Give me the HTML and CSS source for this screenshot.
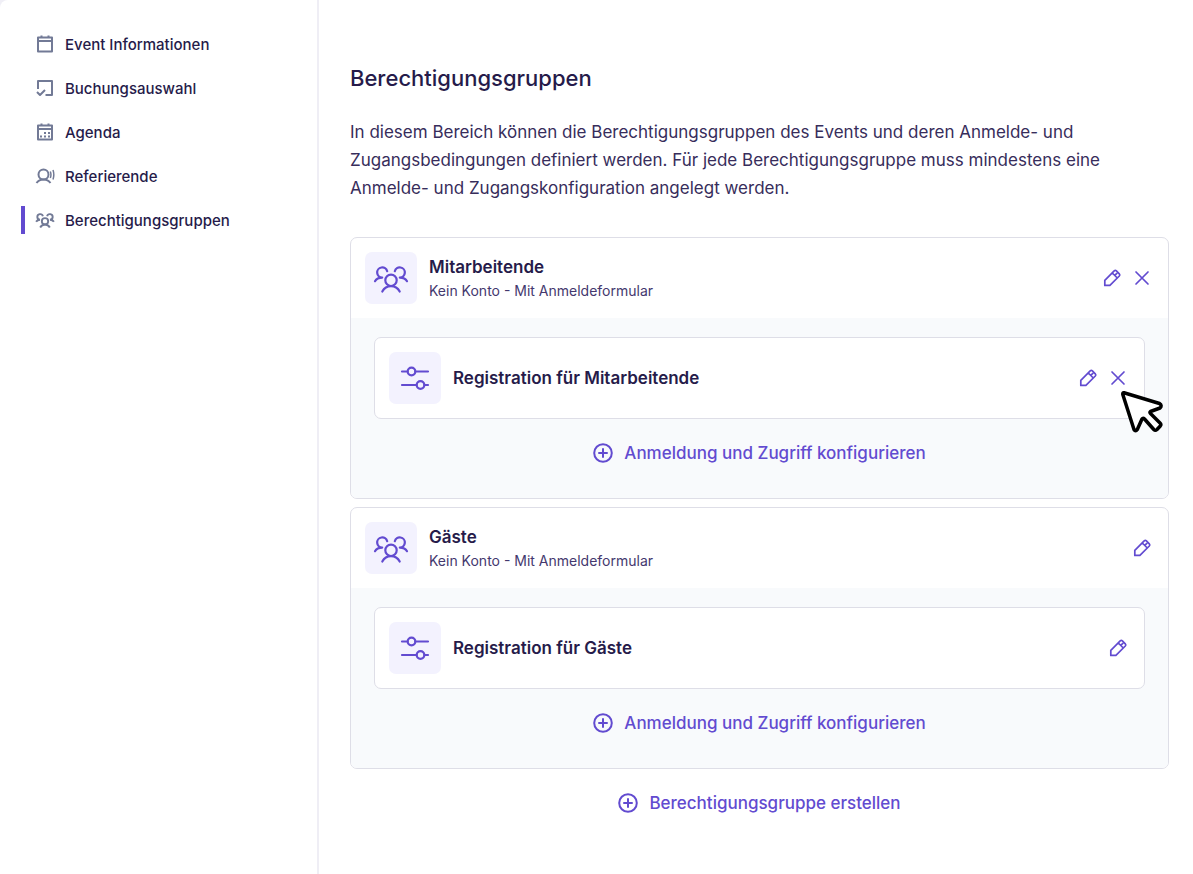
FILE: index.html
```html
<!DOCTYPE html>
<html lang="de">
<head>
    <meta charset="UTF-8">
    <meta name="viewport" content="width=device-width, initial-scale=1.0">
    <title>Berechtigungsgruppen</title>
    <link rel="stylesheet" href="styles.css">
</head>
<body>

<svg class="sprite" aria-hidden="true">
    <symbol id="icon-group" viewBox="0 0 36 36">
        <circle cx="18" cy="20.3" r="5.7"/>
        <path d="M9.300 31.500c1.800-3.400 4.900-5.400 8.700-5.400s6.900 2 8.700 5.400"/>
        <path d="M14.200 11.200A5.100 5.100 0 1 0 9.200 17.600M9.200 17.600C5.600 17.600 3.300 18.900 2 21.200"/>
        <path d="M21.800 11.200A5.100 5.100 0 1 1 26.800 17.600M26.800 17.600C30.400 17.600 32.700 18.900 34 21.200"/>
    </symbol>
    <symbol id="icon-sliders" viewBox="0 0 36 36">
        <path d="M5 11.500h5.500M18.500 11.500H31M5 25h14.500M27.500 25H31"/>
        <circle cx="14.500" cy="11.500" r="3.800"/>
        <circle cx="23.500" cy="25" r="3.800"/>
    </symbol>
    <symbol id="icon-edit" viewBox="0 0 20 20">
        <path d="M2.800 12.300 12.200 2.900a1.600 1.600 0 0 1 2.200 0l2.900 2.900a1.600 1.600 0 0 1 0 2.200L7.900 17.400H2.800zM10.300 5l5 5M12.800 7.400l2-2"/>
    </symbol>
    <symbol id="icon-close" viewBox="0 0 20 20">
        <path d="M4 4l12 12M16 4 4 16"/>
    </symbol>
    <symbol id="icon-plus" viewBox="0 0 20 20">
        <circle cx="10" cy="10" r="8.800"/>
        <path d="M10 6v8M6 10h8"/>
    </symbol>
</svg>

<div class="app">
    <aside class="sidebar">
        <nav>
            <a href="#" class="nav-item">
                <svg class="nav-icon" viewBox="0 0 20 20"><path d="M3 3.500h14v14H3zM3 7h14M6.500 1.500v3M13.500 1.500v3"/></svg>
                Event Informationen
            </a>
            <a href="#" class="nav-item">
                <svg class="nav-icon" viewBox="0 0 20 20"><path d="M3 11V3h14v14h-6.500M2 14l3 3 5-5"/></svg>
                Buchungsauswahl
            </a>
            <a href="#" class="nav-item">
                <svg class="nav-icon" viewBox="0 0 20 20"><path d="M3 3.500h14v14H3zM3 7h14M6.500 1.500v3M13.500 1.500v3"/><path d="M9 11h2M13 11h2M5 14.500h2M9 14.500h2M13 14.500h2"/></svg>
                Agenda
            </a>
            <a href="#" class="nav-item">
                <svg class="nav-icon" viewBox="0 0 20 20"><circle cx="8.500" cy="8.500" r="5"/><path d="M1.500 17c1.600-2.200 4-3.400 7-3.400s5.400 1.200 7 3.400"/><path class="waves" d="M15.300 5.500c.8 2 .8 4.500 0 6.500M18 4c1 2.900 1 6.600 0 9.500"/></svg>
                Referierende
            </a>
            <a href="#" class="nav-item active" aria-current="page">
                <svg class="nav-icon group" viewBox="0 0 36 36"><use href="#icon-group"/></svg>
                Berechtigungsgruppen
            </a>
        </nav>
    </aside>

    <main class="content">
        <h1>Berechtigungsgruppen</h1>
        <p class="intro">In diesem Bereich können die Berechtigungsgruppen des Events und deren Anmelde- und Zugangsbedingungen definiert werden. Für jede Berechtigungsgruppe muss mindestens eine Anmelde- und Zugangskonfiguration angelegt werden.</p>

        <div class="groups">
            <section class="group-card">
                <div class="card-row">
                    <div class="tile"><svg><use href="#icon-group"/></svg></div>
                    <div class="card-text">
                        <h2>Mitarbeitende</h2>
                        <p>Kein Konto - Mit Anmeldeformular</p>
                    </div>
                    <div class="actions">
                        <button type="button" aria-label="Bearbeiten"><svg><use href="#icon-edit"/></svg></button>
                        <button type="button" aria-label="Entfernen"><svg><use href="#icon-close"/></svg></button>
                    </div>
                </div>
                <div class="group-body">
                    <div class="config-card card-row">
                        <div class="tile"><svg><use href="#icon-sliders"/></svg></div>
                        <div class="card-text">
                            <h3>Registration für Mitarbeitende</h3>
                        </div>
                        <div class="actions">
                            <button type="button" aria-label="Bearbeiten"><svg><use href="#icon-edit"/></svg></button>
                            <button type="button" aria-label="Entfernen"><svg><use href="#icon-close"/></svg></button>
                        </div>
                        <svg class="cursor" viewBox="0 0 44 44" aria-hidden="true"><path d="M4 2.800 39.500 13.500Q42.500 15.500 40 18L30.500 21.500Q29.500 22.500 30.500 23.500L40 33Q41.500 34.500 40.300 36L37 39.500Q35.300 41 33.800 39.500L24.500 29Q23 27.500 22 29L17.300 39.500Q15.500 42 14 39.500L2.800 4.500Q2.500 2.500 4 2.800z"/></svg>
                    </div>
                    <button type="button" class="btn-add"><svg><use href="#icon-plus"/></svg>Anmeldung und Zugriff konfigurieren</button>
                </div>
            </section>

            <section class="group-card">
                <div class="card-row">
                    <div class="tile"><svg><use href="#icon-group"/></svg></div>
                    <div class="card-text">
                        <h2>Gäste</h2>
                        <p>Kein Konto - Mit Anmeldeformular</p>
                    </div>
                    <div class="actions">
                        <button type="button" aria-label="Bearbeiten"><svg><use href="#icon-edit"/></svg></button>
                    </div>
                </div>
                <div class="group-body">
                    <div class="config-card card-row">
                        <div class="tile"><svg><use href="#icon-sliders"/></svg></div>
                        <div class="card-text">
                            <h3>Registration für Gäste</h3>
                        </div>
                        <div class="actions">
                            <button type="button" aria-label="Bearbeiten"><svg><use href="#icon-edit"/></svg></button>
                        </div>
                    </div>
                    <button type="button" class="btn-add"><svg><use href="#icon-plus"/></svg>Anmeldung und Zugriff konfigurieren</button>
                </div>
            </section>
        </div>

        <button type="button" class="btn-add"><svg><use href="#icon-plus"/></svg>Berechtigungsgruppe erstellen</button>
    </main>
</div>

</body>
</html>
```
FILE: styles.css
```css
* {
    box-sizing: border-box;
}

body {
    font-family: Inter, "Open Sans", sans-serif;
    color: #261b4a;
    background-color: #f0eff6;
    margin: 0;
}

h1, h2, h3, p {
    margin: 0;
}

svg {
    display: block;
    fill: none;
    stroke: currentColor;
    stroke-width: 1.7;
    stroke-linecap: round;
    stroke-linejoin: round;
}

.sprite {
    position: absolute;
    width: 0;
    height: 0;
}

.app {
    display: flex;
    min-height: 100vh;
    background-color: #ffffff;
    border-top-left-radius: 8px;
}

.sidebar {
    flex: 0 0 319px;
    padding: 30px 21px;
    border-right: 2px solid #efeef5;
}

.sidebar nav {
    display: flex;
    flex-direction: column;
    gap: 16px;
}

.nav-item {
    display: flex;
    align-items: center;
    gap: 10px;
    height: 28px;
    padding-left: 10px;
    border-left: 4px solid transparent;
    color: inherit;
    font-size: 15px;
    font-weight: 500;
    text-decoration: none;
}

.nav-item.active {
    border-left-color: #624bd0;
}

.nav-icon {
    width: 20px;
    height: 20px;
    color: #727a96;
    stroke-width: 2;
    stroke-linecap: butt;
}

.nav-icon.group {
    stroke-width: 3.4;
}

.nav-icon .waves {
    stroke-width: 1.5;
}

.content {
    flex: 1;
    min-width: 0;
    padding: 62px 24px 40px 31px;
}

h1 {
    font-size: 22px;
    font-weight: 500;
    line-height: 32px;
}

.intro {
    margin: 24px 0 35px;
    color: #372d5b;
    font-size: 17px;
    line-height: 28px;
}

.groups {
    display: flex;
    flex-direction: column;
    gap: 8px;
}

.group-card {
    border: 1px solid #dedee7;
    border-radius: 7px;
    background-color: #ffffff;
}

.card-row {
    display: flex;
    align-items: center;
    gap: 12px;
    padding: 14px;
}

.tile {
    display: grid;
    place-items: center;
    width: 52px;
    height: 52px;
    border-radius: 7px;
    background-color: #f3f2fe;
    color: #624bd0;
}

.tile svg {
    width: 36px;
    height: 36px;
    stroke-width: 2.2;
}

.card-text {
    flex: 1;
}

.card-text h2, .card-text h3 {
    font-size: 17px;
    font-weight: 600;
    line-height: 26px;
}

.card-text p {
    color: #44386e;
    font-size: 14px;
    line-height: 22px;
}

.actions {
    display: flex;
    gap: 10px;
    padding-right: 2px;
}

button {
    padding: 0;
    border: none;
    background: none;
    color: #624bd0;
    font-family: inherit;
    cursor: pointer;
}

.actions svg, .btn-add svg {
    width: 20px;
    height: 20px;
}

.group-body {
    padding: 19px 23px 31px;
    border-radius: 0 0 6px 6px;
    background-color: #f8fafc;
}

.config-card {
    position: relative;
    border: 1px solid #dedee7;
    border-radius: 7px;
    background-color: #ffffff;
}

.btn-add {
    display: flex;
    align-items: center;
    gap: 11px;
    height: 28px;
    margin: 20px auto 0;
    font-size: 17px;
    font-weight: 500;
}

.btn-add svg {
    stroke-width: 2;
}

/* mouse pointer over the remove button */
.cursor {
    position: absolute;
    top: 52px;
    right: -20px;
    width: 44px;
    height: 44px;
    fill: #ffffff;
    stroke: #000000;
    stroke-width: 3.5;
}
```
